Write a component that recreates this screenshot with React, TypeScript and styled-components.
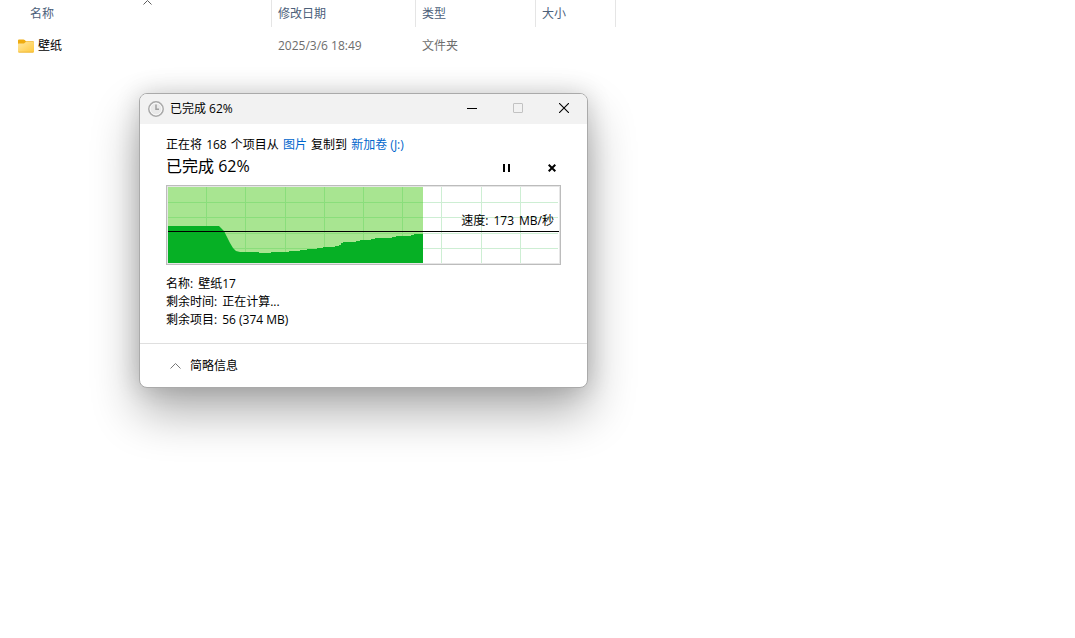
import React from 'react';
import styled, { createGlobalStyle } from 'styled-components';

const GlobalStyle = createGlobalStyle`
  * { box-sizing: border-box; }
  html, body { margin: 0; background: #fff; }
  body {
    color: #000;
    font: 12px/18px "Open Sans", "Noto Sans CJK SC", sans-serif;
  }
  button { font: inherit; color: inherit; }
`;

const Desktop = styled.div`
  position: relative;
  min-height: 100vh;
  overflow: hidden;
`;

const FileTable = styled.table`
  width: 616px;
  table-layout: fixed;
  border-collapse: separate;
  border-spacing: 0;
`;

const HeadCell = styled.th<{ $width: number; $indent?: boolean }>`
  position: relative;
  width: ${(p) => p.$width}px;
  height: 27px;
  padding: 0 0 0 ${(p) => (p.$indent ? 30 : 6)}px;
  border-right: 1px solid #e5e5e5;
  color: #4c607a;
  font-weight: 400;
  text-align: left;
`;

const SortMark = styled.svg`
  position: absolute;
  top: 0;
  left: 143px;
`;

const Cell = styled.td<{ $name?: boolean }>`
  height: 38px;
  padding: 0 0 0 ${(p) => (p.$name ? 18 : 6)}px;
  color: ${(p) => (p.$name ? '#000' : '#6d6d6d')};
`;

const FileName = styled.span`
  display: flex;
  align-items: center;
  gap: 4px;
`;

const Dialog = styled.section`
  position: absolute;
  top: 93px;
  left: 139px;
  width: 449px;
  max-width: calc(100% - 139px);
  border: 1px solid #aaa;
  border-radius: 8px;
  background: #fff;
  box-shadow: 0 24px 48px rgba(0, 0, 0, 0.32), 0 0 24px rgba(0, 0, 0, 0.16);
`;

const TitleBar = styled.header`
  display: flex;
  align-items: center;
  height: 30px;
  padding-left: 8px;
  border-radius: 7px 7px 0 0;
  background: #f2f2f2;
`;

const WindowTitle = styled.span`
  flex: 1;
  padding-left: 6px;
`;

const IconButton = styled.button<{ $height: number }>`
  display: flex;
  align-items: center;
  justify-content: center;
  width: 46px;
  height: ${(p) => p.$height}px;
  padding: 0;
  border: 0;
  background: transparent;
`;

const WindowButtons = styled.div`
  display: flex;
  align-self: flex-start;
`;

const Body = styled.div`
  padding: 12px 26px 14px;
`;

const Summary = styled.p`
  margin: 0;
`;

const Count = styled.span`
  margin: 0 1px;
`;

const Place = styled.a`
  margin: 0 1px;
  color: #0066cc;
  text-decoration: none;
`;

const StatusRow = styled.div`
  display: flex;
  align-items: flex-start;
  height: 31px;
  margin-right: -14px;
`;

const Status = styled.h1`
  flex: 1;
  margin: 0;
  font-size: 16px;
  line-height: 24px;
  font-weight: 400;
`;

const Chart = styled.div`
  position: relative;
  height: 80px;
  border: 1px solid #bcbcbc;
  padding: 1px;
  background: #e6e6e6;
`;

const ChartArt = styled.svg`
  display: block;
  width: 100%;
  height: 76px;
`;

const Speed = styled.span`
  position: absolute;
  top: 26px;
  right: 6px;
  display: flex;
  gap: 5px;
`;

const Details = styled.dl`
  margin: 10px 0 0;
`;

const Detail = styled.div`
  display: flex;
  gap: 5px;
  dt, dd { margin: 0; }
`;

const Footer = styled.footer`
  display: flex;
  align-items: center;
  height: 44px;
  padding-left: 30px;
  border-top: 1px solid #dfdfdf;
`;

const ToggleButton = styled.button`
  display: flex;
  align-items: center;
  gap: 9px;
  padding: 0;
  border: 0;
  background: transparent;
`;

const verticals = [38, 77, 117, 156, 195, 234, 273, 313, 352];
const horizontals = [15, 30, 46, 61];

const SPEED_AREA =
  'M0 76V39H51L53 41L56 44L59 50L62 56L65 61L68 64L72 65H91V66H103V65H121V64H132V63H139V62H149V61H155V60H167V59H171V58H173V56H175V55H188V54H192V53H203V52H207V51H224V50H228V49H243V48H246V47H255V76Z';

function GridLines({ color }: { color: string }) {
  return (
    <g fill={color}>
      {verticals.map((x) => <rect key={x} x={x} y="0" width="1" height="76" />)}
      {horizontals.map((y) => <rect key={y} x="0" y={y} width="390" height="1" />)}
    </g>
  );
}

function SpeedChart() {
  return (
    <Chart>
      <ChartArt viewBox="0 0 391 76" preserveAspectRatio="none" shapeRendering="crispEdges" aria-hidden="true">
        <defs>
          <clipPath id="done"><rect width="255" height="76" /></clipPath>
        </defs>
        <rect width="391" height="76" fill="#fff" />
        <GridLines color="#cdeed3" />
        <g clipPath="url(#done)">
          <rect width="255" height="76" fill="#a8e591" />
          <GridLines color="#8ade7b" />
        </g>
        <path d={SPEED_AREA} fill="#06b025" shapeRendering="auto" />
        <rect y="44" width="391" height="1" fill="#000" />
      </ChartArt>
      <Speed><span>速度:</span><span>173</span><span>MB/秒</span></Speed>
    </Chart>
  );
}

function FolderIcon() {
  return (
    <svg width="16" height="14" viewBox="0 0 16 14" aria-hidden="true">
      <defs>
        <linearGradient id="folder" x1="0" y1="0" x2="1" y2="1">
          <stop offset="0" stopColor="#ffe7a0" />
          <stop offset="1" stopColor="#ffc93c" />
        </linearGradient>
      </defs>
      <path d="M0 1.500Q0 .5 1 .5H5.500Q6.200 .5 6.700 1L8 2.300H15Q16 2.300 16 3.300V6H0Z" fill="#efac10" />
      <path d="M0 5Q0 4.500 .6 4.500H6L8 2.800H15Q16 2.800 16 3.800V12.500Q16 13.500 15 13.500H1Q0 13.500 0 12.500Z" fill="url(#folder)" />
      <path d="M.2 12.800Q.4 13.500 1 13.500H15Q15.600 13.500 15.800 12.800Z" fill="#eab02b" />
    </svg>
  );
}

function ClockIcon() {
  return (
    <svg width="16" height="16" viewBox="0 0 16 16" aria-hidden="true">
      <circle cx="8" cy="8" r="7.200" fill="#e9e9e9" stroke="#a9a9a9" strokeWidth="1.500" />
      <circle cx="8" cy="8" r="5.800" fill="none" stroke="#f8f8f8" />
      <path d="M8 3.500V8.300H11" fill="none" stroke="#a0a0a0" strokeWidth="1.500" />
    </svg>
  );
}

export default function App() {
  return (
    <>
      <GlobalStyle />
      <Desktop>
        <FileTable>
          <thead>
            <tr>
              <HeadCell $width={272} $indent>
                名称
                <SortMark width="9" height="5" viewBox="0 0 9 5" aria-hidden="true">
                  <path d="M.5 4.500L4.500 .5L8.500 4.500" fill="none" stroke="#5c5c5c" />
                </SortMark>
              </HeadCell>
              <HeadCell $width={144}>修改日期</HeadCell>
              <HeadCell $width={120}>类型</HeadCell>
              <HeadCell $width={80}>大小</HeadCell>
            </tr>
          </thead>
          <tbody>
            <tr>
              <Cell $name><FileName><FolderIcon />壁纸</FileName></Cell>
              <Cell>2025/3/6 18:49</Cell>
              <Cell>文件夹</Cell>
              <Cell />
            </tr>
          </tbody>
        </FileTable>

        <Dialog role="dialog" aria-label="已完成 62%">
          <TitleBar>
            <ClockIcon />
            <WindowTitle>已完成 62%</WindowTitle>
            <WindowButtons>
              <IconButton $height={28} aria-label="最小化">
                <svg width="10" height="10" viewBox="0 0 10 10"><path d="M0 5.500H10" stroke="#000" /></svg>
              </IconButton>
              <IconButton $height={28} aria-label="最大化" disabled>
                <svg width="10" height="10" viewBox="0 0 10 10"><rect x=".5" y=".5" width="9" height="9" rx=".5" fill="none" stroke="#c2c2c2" /></svg>
              </IconButton>
              <IconButton $height={28} aria-label="关闭">
                <svg width="10" height="10" viewBox="0 0 10 10"><path d="M0 0L10 10M10 0L0 10" stroke="#000" strokeWidth="1.100" /></svg>
              </IconButton>
            </WindowButtons>
          </TitleBar>

          <Body>
            <Summary>
              正在将 <Count>168</Count> 个项目从 <Place href="#pictures">图片</Place> 复制到 <Place href="#volume-j">新加卷 (J:)</Place>
            </Summary>
            <StatusRow>
              <Status>已完成 62%</Status>
              <IconButton $height={28} aria-label="暂停">
                <svg width="8" height="8" viewBox="0 0 8 8"><path d="M1 0H3V8H1ZM6 0H8V8H6Z" fill="#000" /></svg>
              </IconButton>
              <IconButton $height={28} aria-label="取消">
                <svg width="8" height="8" viewBox="0 0 8 8"><path d="M.7 .7L7.300 7.300M7.300 .7L.7 7.300" stroke="#000" strokeWidth="2" /></svg>
              </IconButton>
            </StatusRow>
            <SpeedChart />
            <Details>
              <Detail><dt>名称:</dt><dd>壁纸17</dd></Detail>
              <Detail><dt>剩余时间:</dt><dd>正在计算...</dd></Detail>
              <Detail><dt>剩余项目:</dt><dd>56 (374 MB)</dd></Detail>
            </Details>
          </Body>

          <Footer>
            <ToggleButton>
              <svg width="11" height="6" viewBox="0 0 11 6" aria-hidden="true">
                <path d="M.5 5.500L5.500 .5L10.500 5.500" fill="none" stroke="#777" />
              </svg>
              简略信息
            </ToggleButton>
          </Footer>
        </Dialog>
      </Desktop>
    </>
  );
}
